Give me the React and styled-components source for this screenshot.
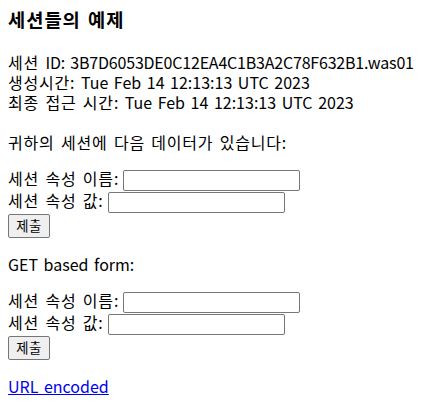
import React from "react";
import styled, { createGlobalStyle } from "styled-components";

const Global = createGlobalStyle`
  html, body { margin: 0; padding: 0; background: #fff; }
  body {
    font-family: "Noto Sans CJK KR", "Noto Sans", sans-serif;
    font-size: 16px;
    line-height: 20px;
    word-spacing: 2px;
    color: #000;
  }
`;

const Page = styled.main`
  padding: 7px 8px 0 8px;
`;

const Title = styled.h3`
  margin: 0;
  font-size: 18.72px;
  line-height: 24px;
  font-weight: 700;
  letter-spacing: 1px;
`;

const Para = styled.p`
  margin: ${(p) => p.$top || 16}px 0 0 0;
`;

const Line = styled.div``;

const Ko = styled.span`
  letter-spacing: 0.8px;
`;

const Code = styled.span`
  letter-spacing: -0.2px;
`;

const Form = styled.form`
  margin: 16px 0 0 0;
  display: flex;
  flex-direction: column;
  align-items: flex-start;
`;

const Row = styled.label`
  display: flex;
  align-items: flex-start;
  gap: 4px;
  height: 22px;
`;

const Field = styled.input`
  box-sizing: border-box;
  width: 177px;
  height: 21px;
  margin: 2px 0 0 0;
  padding: 1px 2px;
  border: 1px solid #767676;
  border-radius: 2px;
  background: #fff;
  font-size: 13.33px;
`;

const Submit = styled.button`
  box-sizing: border-box;
  width: 42px;
  height: 24px;
  margin-top: 2px;
  padding: 0 6px;
  border: 1px solid #767676;
  border-radius: 2px;
  background: #efefef;
  color: #000;
  font-family: "Noto Sans CJK KR", sans-serif;
  font-size: 13.33px;
  line-height: 20px;
  letter-spacing: 0.5px;
`;

const Link = styled.a`
  display: inline-block;
  margin-top: 16px;
  color: #0000ee;
  text-decoration: underline;
`;

function SessionForm({ method }) {
  return (
    <Form method={method} onSubmit={(e) => e.preventDefault()}>
      <Row>
        <Ko>세션 속성 이름:</Ko>
        <Field type="text" name="dataname" />
      </Row>
      <Row>
        <Ko>세션 속성 값:</Ko>
        <Field type="text" name="datavalue" />
      </Row>
      <Submit type="submit">제출</Submit>
    </Form>
  );
}

export default function App() {
  return (
    <>
      <Global />
      <Page>
        <Title>세션들의 예제</Title>
        <Para $top={21}>
          <Line>
            <Ko>세션 </Ko>
            <Code>ID: 3B7D6053DE0C12EA4C1B3A2C78F632B1.was01</Code>
          </Line>
          <Line>
            <Ko>생성시간:</Ko> Tue Feb 14 12:13:13 UTC 2023
          </Line>
          <Line>
            <Ko>최종 접근 시간:</Ko> Tue Feb 14 12:13:13 UTC 2023
          </Line>
        </Para>
        <Para $top={20}>
          <Ko>귀하의 세션에 다음 데이터가 있습니다:</Ko>
        </Para>
        <SessionForm method="post" />
        <Para>GET based form:</Para>
        <SessionForm method="get" />
        <Link href="#">URL encoded</Link>
      </Page>
    </>
  );
}
